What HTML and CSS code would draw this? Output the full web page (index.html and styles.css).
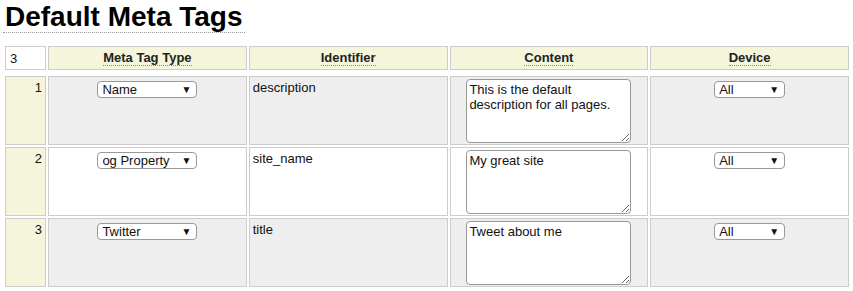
FILE: index.html
```html
<!DOCTYPE html>
<html lang="en">
<head>
    <meta charset="UTF-8">
    <title>Default Meta Tags</title>
    <link rel="stylesheet" href="styles.css">
</head>
<body>
    <h1 class="page-title">Default Meta Tags</h1>

    <div class="meta-grid">
        <div class="cell count-cell"><input class="count-input" type="text" value="3"></div>
        <div class="cell head-cell"><abbr title="Kind of meta tag">Meta Tag Type</abbr></div>
        <div class="cell head-cell"><abbr title="Name or property value">Identifier</abbr></div>
        <div class="cell head-cell"><abbr title="Content attribute">Content</abbr></div>
        <div class="cell head-cell"><abbr title="Devices the tag applies to">Device</abbr></div>

        <div class="row odd">
            <div class="cell num-cell">1</div>
            <div class="cell center"><span class="pick wide"><select><option>Name</option><option>og Property</option><option>Twitter</option></select></span></div>
            <div class="cell">description</div>
            <div class="cell center"><textarea>This is the default description for all pages.</textarea></div>
            <div class="cell center"><span class="pick"><select><option>All</option></select></span></div>
        </div>

        <div class="row">
            <div class="cell num-cell">2</div>
            <div class="cell center"><span class="pick wide"><select><option>og Property</option><option>Name</option><option>Twitter</option></select></span></div>
            <div class="cell">site_name</div>
            <div class="cell center"><textarea>My great site</textarea></div>
            <div class="cell center"><span class="pick"><select><option>All</option></select></span></div>
        </div>

        <div class="row odd">
            <div class="cell num-cell">3</div>
            <div class="cell center"><span class="pick wide"><select><option>Twitter</option><option>Name</option><option>og Property</option></select></span></div>
            <div class="cell">title</div>
            <div class="cell center"><textarea>Tweet about me</textarea></div>
            <div class="cell center"><span class="pick"><select><option>All</option></select></span></div>
        </div>
    </div>
</body>
</html>
```

FILE: styles.css
```css
body {
    margin: 0;
    padding: 0 2px 0 3px;
    font-family: "Liberation Sans", Arial, sans-serif;
    font-size: 13px;
    color: #111;
    background: white;
}

.page-title {
    display: inline-block;
    margin: 2px 0 0;
    padding: 0 2px;
    font-size: 28px;
    line-height: 30px;
    color: #000;
    border-bottom: 1px dotted #999;
}

.meta-grid {
    display: grid;
    grid-template-columns: 41px repeat(4, 1fr);
    gap: 2px;
    padding: 2px;
    margin-top: 11px;
}

.row {
    display: contents;
}

.cell {
    border: 1px solid #ccc;
    padding: 3px 3px 1px;
    min-height: 63px;
    line-height: 15px;
}

.count-cell,
.head-cell {
    min-height: 0;
    height: 24px;
    padding: 0;
    box-sizing: border-box;
    margin-bottom: 4px;
}

.count-cell {
    background: white;
}

.count-input {
    width: 100%;
    height: 100%;
    box-sizing: border-box;
    border: none;
    padding: 0 4px;
    font: 13px "Liberation Sans", Arial, sans-serif;
    color: #111;
    background: transparent;
}

.head-cell {
    background: #f5f5dc;
    text-align: center;
    font-weight: bold;
    line-height: 22px;
}

.head-cell abbr {
    text-decoration: none;
    border-bottom: 1px dotted #888;
    color: #222;
}

.num-cell {
    background: #f5f5dc;
    text-align: right;
}

.odd .cell {
    background: #eee;
}

.odd .num-cell {
    background: #f5f5dc;
}

.center {
    text-align: center;
}

.pick {
    position: relative;
    display: inline-block;
    margin-top: 1px;
    vertical-align: top;
}

.pick select {
    appearance: none;
    width: 71px;
    height: 17px;
    padding: 0 4px;
    border: 1px solid #999;
    border-radius: 4px;
    background: white;
    font: 13px "Liberation Sans", Arial, sans-serif;
    color: #111;
    line-height: 15px;
    display: block;
}

.pick.wide select {
    width: 100px;
}

.pick::after {
    content: "▼";
    position: absolute;
    right: 6px;
    top: 3px;
    font-size: 10px;
    line-height: 11px;
    color: #111;
    pointer-events: none;
}

textarea {
    display: block;
    margin: -1px auto 0;
    width: 165px;
    height: 64px;
    box-sizing: border-box;
    padding: 2px;
    border: 1px solid #999;
    border-radius: 4px;
    font: 13px "Liberation Sans", Arial, sans-serif;
    line-height: 15px;
    color: #111;
    background: white;
}
```
